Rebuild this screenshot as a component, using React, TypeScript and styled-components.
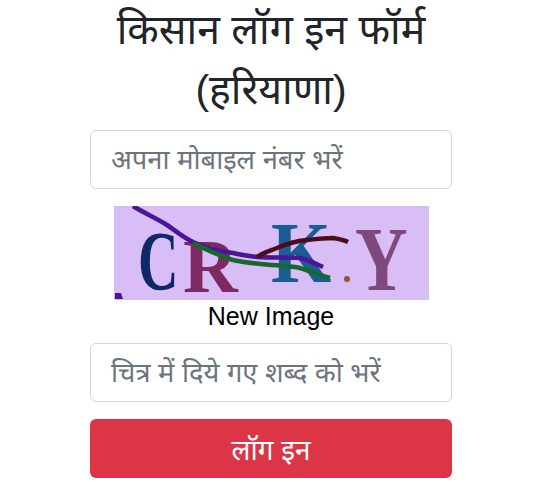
import styled, { createGlobalStyle } from "styled-components";

const GlobalStyle = createGlobalStyle`
  html, body {
    margin: 0;
    padding: 0;
    background: #fff;
  }
`;

const Page = styled.div`
  box-sizing: border-box;
  width: 547px;
  height: 482px;
  padding-right: 5px;
  overflow: hidden;
  display: flex;
  flex-direction: column;
  align-items: center;
  font-family: "Liberation Sans", "Noto Sans", sans-serif;
`;

const Title = styled.h1`
  margin: 0 0 10px;
  width: 400px;
  font-size: 41px;
  font-weight: 400;
  line-height: 60px;
  color: #212529;
  text-align: center;
`;

const Form = styled.form`
  width: 362px;
  display: flex;
  flex-direction: column;
  align-items: center;
`;

const Field = styled.input`
  box-sizing: border-box;
  width: 100%;
  height: 59px;
  padding: 0 20px;
  border: 1.5px solid #d3d7db;
  border-radius: 6px;
  background: #fff;
  font-family: inherit;
  font-size: 27.3px;
  color: #495057;
  outline: none;
  &::placeholder {
    color: #6c757d;
    opacity: 1;
  }
`;

const CaptchaBlock = styled.div`
  display: flex;
  flex-direction: column;
  align-items: center;
  margin: 17px 0 11px;
`;

const CaptchaImage = styled.svg`
  display: block;
  width: 315px;
  height: 94px;
  background: #d8bdf7;
`;

const Caption = styled.div`
  font-size: 25px;
  line-height: 32px;
  color: #000;
`;

const Submit = styled.button`
  width: 100%;
  height: 59px;
  margin-top: 17px;
  border: 0;
  border-radius: 6px;
  background: #dc3545;
  color: #fff;
  font-family: inherit;
  font-size: 28px;
`;

const Captcha = () => (
  <CaptchaImage viewBox="0 0 315 94" role="img" aria-label="CR K Y">
    <defs>
      <filter id="soft">
        <feGaussianBlur stdDeviation="0.5" />
      </filter>
    </defs>
    <g filter="url(#soft)" fontFamily="'Liberation Serif', serif" fontWeight="700">
      <text transform="translate(24 84) scale(0.66 1)" fill="#0f2a66" fontSize="85">C</text>
      <text transform="translate(69 86)" fill="#7d2c62" fontSize="76">R</text>
      <text transform="translate(157 76) scale(0.9 1)" fill="#1f5c94" fontSize="86">K</text>
      <text transform="translate(241 84) scale(0.8 1)" fill="#7e4a7c" fontSize="91">Y</text>
      <path d="M19 0 C30 7 42 12 53 19 C62 25 70 32 79 36 C92 42 105 45 119 47 C127 49 135 50 143 51 C158 52 172 51 186 52 C195 54 202 58 209 61" fill="none" stroke="#4a1296" strokeWidth="4.5" />
      <path d="M79 37 C92 43 105 50 119 54 C132 57 146 58 159 59 C168 60 177 60 186 62 C196 65 206 69 216 72" fill="none" stroke="#13692c" strokeWidth="4.5" />
      <path d="M143 51 C149 47 156 45 163 42 C172 38 183 35 193 34 C202 33 211 32 219 32 C225 33 230 34 234 36" fill="none" stroke="#4a0f1c" strokeWidth="4.5" />
      <path d="M1 87 H7 L9 93 H1 Z" fill="#4a1296" />
      <circle cx="233" cy="73" r="3" fill="#8a5a2a" />
    </g>
  </CaptchaImage>
);

export default function App() {
  return (
    <>
      <GlobalStyle />
      <Page>
        <Title>किसान लॉग इन फॉर्म (हरियाणा)</Title>
        <Form>
          <Field placeholder="अपना मोबाइल नंबर भरें" />
          <CaptchaBlock>
            <Captcha />
            <Caption>New Image</Caption>
          </CaptchaBlock>
          <Field placeholder="चित्र में दिये गए शब्द को भरें" />
          <Submit type="button">लॉग इन</Submit>
        </Form>
      </Page>
    </>
  );
}
